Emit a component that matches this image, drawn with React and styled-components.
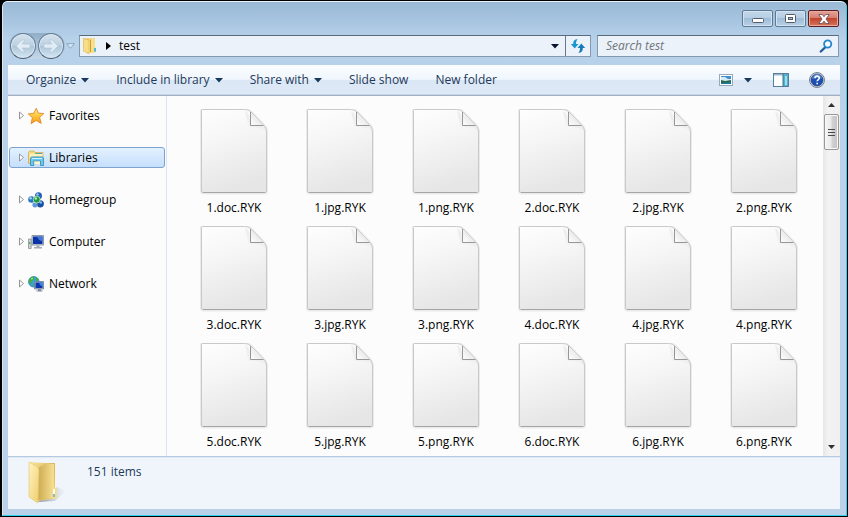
import React from 'react'
import styled, { createGlobalStyle } from 'styled-components'

const GlobalStyle = createGlobalStyle`
  * {
    box-sizing: border-box;
  }
  body {
    margin: 0;
    background: #000;
    font-family: 'Open Sans', 'Noto Sans', sans-serif;
    font-size: 12px;
    line-height: 16px;
    color: #000;
  }
  button, input {
    font: inherit;
    color: inherit;
    margin: 0;
    padding: 0;
  }
  button {
    border: 0;
    background: none;
  }
  svg {
    display: block;
    flex: none;
  }
`

const Window = styled.div`
  display: flex;
  flex-direction: column;
  min-height: 100vh;
  padding: 0 6px 7px;
  border: 1px solid #000;
  border-width: 1px 1px 1px 2px;
  border-radius: 7px 7px 0 0;
  background: linear-gradient(#98b8d5, #b6d1ea 38px, #b9d2e9 120px, #b9d2e9);
  box-shadow: inset 0 1px #eaf3fa, inset -1px -1px #29d3f4, inset 1px 0 #d8e8f5;
`

const TitleBar = styled.header`
  display: flex;
  justify-content: flex-end;
  gap: 2px;
  height: 34px;
  padding: 9px 2px 0 0;
`

const CaptionButton = styled.button`
  display: flex;
  align-items: center;
  justify-content: center;
  width: 31px;
  height: 17px;
  border: 1px solid ${props => (props.$close ? '#5b1f24' : '#5c7892')};
  border-radius: 2px;
  background: ${props =>
    props.$close
      ? 'linear-gradient(#e5a497, #d67d6e 48%, #c2452f 50%, #d8745a)'
      : 'linear-gradient(#c3d7ea, #b5cde3 48%, #9fbdd8 50%, #b8d0e6)'};
  box-shadow: inset 0 0 0 1px ${props => (props.$close ? '#e9aa9e' : '#d3e3f1')};
`

const NavBar = styled.div`
  display: flex;
  align-items: center;
  height: 22px;
  margin-bottom: 8px;
  padding-right: 2px;
`

const History = styled.div`
  display: flex;
  align-items: center;
  margin: 0 3px 0 1px;
`

const HistoryPair = styled.div`
  display: flex;
  gap: 2px;
  height: 26px;
  padding: 0 1px;
  border-radius: 13px;
  background: linear-gradient(#91aec8, #c3d8e9);
`

const HistoryButton = styled.button`
  display: flex;
  align-items: center;
  justify-content: center;
  width: 26px;
  height: 26px;
  border: 1px solid #677f95;
  border-bottom-color: #4a5c6e;
  border-radius: 50%;
  background: linear-gradient(#d5e3ee, #bccfe0 48%, #acc5d9 50%, #d3e6f4);
  box-shadow: inset 0 0 0 1px #dbe8f2;
`

const SmallButton = styled.button`
  display: flex;
  align-items: center;
  justify-content: center;
  width: ${props => props.$width}px;
  height: 20px;
`

const AddressBar = styled.div`
  display: flex;
  flex: 1;
  align-items: center;
  height: 22px;
  padding-left: 2px;
  border: 1px solid #8499ad;
  border-top-color: #596b7b;
  background: #ebf2fa;
`

const Crumb = styled.button`
  margin-left: 8px;
`

const CrumbArrow = styled.span`
  margin-left: 8px;
`

const Spacer = styled.div`
  flex: 1;
`

const Refresh = styled(SmallButton)`
  border-left: 1px solid #65798b;
`

const SearchBox = styled.label`
  display: flex;
  align-items: center;
  width: 242px;
  height: 22px;
  margin-left: 6px;
  padding: 0 5px 0 8px;
  border: 1px solid #8499ad;
  border-top-color: #596b7b;
  background: #ebf2fa;
`

const SearchInput = styled.input`
  flex: 1;
  min-width: 0;
  border: 0;
  outline: 0;
  background: none;
  &::placeholder {
    color: #707579;
    font-style: italic;
    opacity: 1;
  }
`

const Client = styled.div`
  display: flex;
  flex: 1;
  flex-direction: column;
  margin-right: 1px;
  background: #fcfcfc;
`

const Toolbar = styled.div`
  display: flex;
  align-items: center;
  gap: 27px;
  height: 31px;
  padding: 0 15px 0 18px;
  border-bottom: 1px solid #a0afc3;
  background: linear-gradient(#fcfeff, #eff6fd 48%, #dce7f5 50%, #dde9f7);
  box-shadow: inset 0 -1px #c7d5e6;
  color: #1e395b;
`

const ToolButton = styled.button`
  display: flex;
  align-items: center;
  gap: 5px;
  white-space: nowrap;
`

const ToolIcons = styled.div`
  display: flex;
  align-items: center;
  gap: 20px;
  margin-left: auto;
`

const ViewButton = styled(ToolButton)`
  gap: 11px;
  padding-right: 1px;
`

const Body = styled.div`
  display: flex;
  flex: 1;
`

const Sidebar = styled.nav`
  display: flex;
  flex: none;
  flex-direction: column;
  gap: 21px;
  width: 159px;
  padding: 9px 1px;
  border-right: 1px solid #dbe5f0;
`

const TreeItem = styled.button`
  display: flex;
  align-items: center;
  height: 21px;
  padding-left: 8px;
  border: 1px solid ${props => (props.$selected ? '#7da2ce' : 'transparent')};
  border-radius: 3px;
  background: ${props => (props.$selected ? 'linear-gradient(#e3f1fe, #c5dffc)' : 'none')};
`

const TreeIcon = styled.span`
  margin: 0 5px 0 3px;
`

const Files = styled.ul`
  display: grid;
  flex: 1;
  grid-template-columns: repeat(auto-fill, 106px);
  grid-auto-rows: 117px;
  align-content: start;
  margin: 0;
  padding: 13px 0 0 14px;
  list-style: none;
  height: 360px;
  min-height: 100%;
`

const File = styled.li`
  display: flex;
  flex-direction: column;
  align-items: center;
  gap: 4px;
`

const ScrollBar = styled.div`
  display: flex;
  flex: none;
  flex-direction: column;
  align-items: center;
  width: 17px;
  background: linear-gradient(90deg, #e6e6e6, #f2f2f2 30%, #f0f0f0);
`

const ScrollButton = styled.button`
  display: flex;
  align-items: center;
  justify-content: center;
  width: 17px;
  height: 18px;
  margin-top: ${props => (props.$end ? 'auto' : '0')};
`

const Thumb = styled.div`
  display: flex;
  flex-direction: column;
  align-items: center;
  justify-content: center;
  gap: 2px;
  width: 15px;
  height: 36px;
  border: 1px solid #989898;
  border-radius: 2px;
  background: linear-gradient(90deg, #f5f5f5, #e9e9eb 48%, #d3d3d6 52%, #c2c2c6);
  box-shadow: inset 0 0 0 1px #f8f8f8;
`

const Grip = styled.span`
  width: 7px;
  height: 1px;
  background: #4b4b4b;
`

const Details = styled.footer`
  display: flex;
  align-items: flex-start;
  gap: 20px;
  height: 53px;
  padding: 3px 18px;
  border-top: 1px solid #b5c9e0;
  box-shadow: inset 0 1px #dfe9f4;
  background: #f0f5fc;
  color: #1e395b;
`

const DetailsText = styled.span`
  padding-top: 4px;
`

const Caret = ({ color = '#173a5c' }) => (
  <svg width="8" height="5" viewBox="0 0 8 5">
    <path d="M0 0h8L4 4.5z" fill={color} />
  </svg>
)

const Arrow = ({ back }) => (
  <svg width="16" height="16" viewBox="0 0 16 16">
    <path
      d={back ? 'M1 8l6-6h3L7 6h8v4H7l3 4H7z' : 'M15 8L9 2H6l3 4H1v4h8l-3 4h3z'}
      fill="#e1edf6"
      stroke="#b4c8d9"
      strokeWidth=".7"
    />
  </svg>
)

const FolderIcon = () => (
  <svg width="41" height="48" viewBox="0 0 41 48">
    <defs>
      <linearGradient id="folderBack" x2="1" y2="1">
        <stop offset="0" stopColor="#fbe9a5" />
        <stop offset=".5" stopColor="#d9b656" />
        <stop offset="1" stopColor="#f5d779" />
      </linearGradient>
      <linearGradient id="folderInner">
        <stop offset="0" stopColor="#cdab52" />
        <stop offset="1" stopColor="#f8e092" />
      </linearGradient>
      <linearGradient id="folderFront" x2="1" y2="1">
        <stop offset="0" stopColor="#fff3c4" />
        <stop offset="1" stopColor="#efce6b" />
      </linearGradient>
      <linearGradient id="folderShade">
        <stop offset="0" stopColor="#6d7685" stopOpacity=".8" />
        <stop offset="1" stopColor="#a7b4c8" stopOpacity="0" />
      </linearGradient>
    </defs>
    <path d="M12 42l17-1 11-10-9-4z" fill="url(#folderShade)" />
    <path d="M3 2l15 1h11v25l2 1v9l-19 3z" fill="url(#folderBack)" />
    <path d="M12 8l7-4h9v34l-16 2z" fill="url(#folderInner)" />
    <path d="M3 2l9 5 1 3-1 33-9-6z" fill="url(#folderFront)" stroke="#e2c46d" strokeWidth=".6" />
    <path d="M27 26l4 3v9l-4 1z" fill="#f7dd85" />
    <path d="M28 29v8" stroke="#fff" strokeWidth="2" />
    <path d="M28 34v3" stroke="#459fd0" strokeWidth="1.400" />
  </svg>
)

const CrumbFolder = () => (
  <svg width="16" height="18" viewBox="0 0 16 18">
    <path d="M1.500 1.500H13v9l1 1V15l-9 1.500z" fill="#e3bb50" />
    <path d="M7 1.500h6V15l-6 1.500z" fill="#f9df88" />
    <path d="M1.500 1.500L5 2.500l2 1v13L1.500 14z" fill="#f9dd85" stroke="#dfbc55" strokeWidth=".7" />
    <path d="M8.500 2.500v12.500" stroke="#c99e3a" />
    <path d="M12 11h2v3.500h-2z" fill="#52b9cf" />
  </svg>
)

const RefreshIcon = () => (
  <svg width="16" height="16" viewBox="0 0 16 16">
    <path d="M7.500 1C4.500 1.500 3 3 3.200 6H.8L4.700 10.500 8.500 6H6C6 4 6.500 2.500 7.500 1z" fill="#1997d0" />
    <path d="M8.500 15c3-.5 4.500-2 4.300-5h2.400l-3.900-4.500L7.500 10H10c0 2-.5 3.500-1.500 5z" fill="#167cb9" />
  </svg>
)

const SearchIcon = () => (
  <svg width="14" height="14" viewBox="0 0 14 14" fill="none">
    <path d="M6 8.500L1.800 12.500" stroke="#245d9c" strokeWidth="2.400" strokeLinecap="round" />
    <circle cx="8.700" cy="5" r="3.600" fill="#f5fbff" stroke="#2485cb" strokeWidth="1.800" />
  </svg>
)

const PictureIcon = () => (
  <svg width="14" height="12" viewBox="0 0 14 12">
    <rect x=".5" y=".5" width="13" height="11" fill="#fff" stroke="#97a9bb" />
    <path d="M2 2h10v8H2z" fill="#438fcb" />
    <path d="M2 3h4l3 2h3v2H2z" fill="#d2ecf6" />
    <path d="M2 6l4 1 6-1v4H2z" fill="#28684f" />
    <path d="M2 9l10-1v2H2z" fill="#1d7a9e" />
  </svg>
)

const PaneIcon = () => (
  <svg width="16" height="14" viewBox="0 0 16 14">
    <rect x=".5" y=".5" width="15" height="13" fill="#fff" stroke="#567d9b" />
    <path d="M1 1h14v1.500H1z" fill="#9db7c9" />
    <path d="M10 1h5v12h-5z" fill="#51b1cf" />
    <path d="M10 .5v13" stroke="#416f8d" />
    <path d="M12 3h2v9h-2z" fill="#9cdced" />
  </svg>
)

const HelpIcon = () => (
  <svg width="16" height="16" viewBox="0 0 16 16">
    <circle cx="8" cy="8" r="7.500" fill="#dce1e8" stroke="#76818f" />
    <circle cx="8" cy="8" r="6" fill="#1c4fb3" stroke="#173778" strokeWidth=".7" />
    <path d="M3 7a5 5 0 0 1 10 0c-3-1.500-6-1-10 0z" fill="#6292dc" opacity=".7" />
    <path d="M6 6.200C6 3.300 10.500 3.500 10.300 6c-.1 1.500-2.100 1.600-2.100 3.300M8.200 10.800v1.500" fill="none" stroke="#fff" strokeWidth="1.600" />
  </svg>
)

const StarIcon = () => (
  <svg width="16" height="16" viewBox="0 0 16 16">
    <defs>
      <linearGradient id="star" x2="0" y2="1">
        <stop offset="0" stopColor="#fff09a" />
        <stop offset=".5" stopColor="#fdc63d" />
        <stop offset="1" stopColor="#f49a22" />
      </linearGradient>
    </defs>
    <path d="M8.200.2l2.200 4.900 5.400.5-4.100 3.700 1.500 6.100-5-2.900-5.200 3.200 1.400-6L.3 5.900l5.600-.7z" fill="url(#star)" stroke="#e0801c" strokeWidth=".8" strokeLinejoin="round" />
  </svg>
)

const LibraryIcon = () => (
  <svg width="16" height="16" viewBox="0 0 16 16">
    <path d="M.5 2.500L1.500 1h4.500l1 1.500h8V13.500H.5z" fill="#f5d77d" stroke="#cfae57" strokeWidth=".8" />
    <path d="M1.500 3.500h13v3h-13z" fill="#fff1c0" />
    <path d="M7 3.500h4" stroke="#63b572" />
    <path d="M11 3.500h3" stroke="#5a9fd8" />
    <path d="M2.500 15.500V9C2.500 7.800 3.300 7 4.500 7h9.500c1 0 1.600.8 1.600 2v6.500h-3.100V11H5.800v4.500z" fill="#6cc8ec" stroke="#3593c4" strokeWidth=".9" />
    <path d="M6.300 11.500h5.700V14H6.300z" fill="#fdf3cf" />
    <path d="M4 8.500h10" stroke="#cdf2ff" />
  </svg>
)

const HomegroupIcon = () => (
  <svg width="16" height="16" viewBox="0 0 16 16">
    <circle cx="10.500" cy="3.800" r="3.500" fill="#2560b4" />
    <circle cx="3.500" cy="7.500" r="3.300" fill="#2a74c4" />
    <circle cx="12.300" cy="11.800" r="3.600" fill="#1b4fa4" />
    <circle cx="7" cy="12.800" r="2.600" fill="#5e98d4" />
    <circle cx="8.700" cy="7.600" r="3.500" fill="#1f9a45" stroke="#d6f2dd" strokeWidth=".7" />
    <circle cx="9.500" cy="2.400" r="1.200" fill="#9fceee" />
    <circle cx="2.600" cy="6.300" r="1.200" fill="#9fdaf1" />
    <circle cx="7.800" cy="6.500" r="1.200" fill="#b8ecb9" />
    <circle cx="12.800" cy="10.500" r="1.300" fill="#85b7e6" />
  </svg>
)

const ComputerIcon = () => (
  <svg width="16" height="16" viewBox="0 0 16 16">
    <path d="M.5 5h2.700v9.500H.5z" fill="#cbd1d3" stroke="#7b8589" strokeWidth=".7" />
    <path d="M1 8h1.500v2H1z" fill="#59b34f" />
    <path d="M4 1.500h11.500V11H4z" fill="#cdd3dc" stroke="#828d9d" strokeWidth=".9" />
    <path d="M5 2.500h9.500V10H5z" fill="#0b32a6" />
    <path d="M9 2.500h5.500V7C11.500 7 10 5 9 2.500z" fill="#3f78dc" />
    <path d="M8.500 11.500h3V13H14v1.500H6V13h2.500z" fill="#a4acb6" />
  </svg>
)

const NetworkIcon = () => (
  <svg width="16" height="16" viewBox="0 0 16 16">
    <circle cx="5.800" cy="5.800" r="5.300" fill="#36a4d8" stroke="#2677b2" strokeWidth=".7" />
    <path d="M3 1.500c3-2 4 0 3 2L4 5.500 2.500 8C0 6 1 3 3 1.500zM8 1l3 3-3 1zM4 8l3 1v2z" fill="#43b03d" />
    <path d="M3 2.500l2-.8-1 2z" fill="#d9f6cd" />
    <path d="M6.500 5.500h9V13h-9z" fill="#aebccc" stroke="#6c7d94" strokeWidth=".8" />
    <path d="M7.500 6.500h7V12h-7z" fill="#0b35aa" />
    <path d="M11 6.500h3.500V10c-2 0-3-1-3.500-3.500z" fill="#3f86e6" />
    <path d="M10 13h3v1.500h1.500v1h-6v-1H10z" fill="#7d8ea3" />
  </svg>
)

const PageIcon = () => (
  <svg width="68" height="87" viewBox="0 0 68 87">
    <defs>
      <linearGradient id="page" x2=".25" y2="1">
        <stop offset="0" stopColor="#fefefe" />
        <stop offset=".4" stopColor="#f6f6f6" />
        <stop offset="1" stopColor="#e6e6e6" />
      </linearGradient>
      <linearGradient id="fold" x1="0" y1="1" x2=".5" y2=".5">
        <stop offset="0" stopColor="#fff" />
        <stop offset="1" stopColor="#ececec" />
      </linearGradient>
      <linearGradient id="foldShade" x1=".2" y1=".2" x2="0" y2="1">
        <stop offset="0" stopColor="#000" stopOpacity=".05" />
        <stop offset="1" stopColor="#000" stopOpacity="0" />
      </linearGradient>
    </defs>
    <path d="M2.500.5H44.500C48 .5 50 2 52 4L63 15.500C65.500 18 66.500 20 66.500 23V82q0 2-2 2H3.500q-2 0-2-2V1.500q0-1 1-1z" fill="none" stroke="#000" strokeOpacity=".07" strokeWidth="3" />
    <path d="M2.500.5H44.500C48 .5 50 2 52 4L63 15.500C65.500 18 66.500 20 66.500 23V82q0 1.500-1.500 1.500H3q-1.500 0-1.500-1.500V1.500q0-1 1-1z" fill="url(#page)" stroke="#c9c9c9" />
    <path d="M3 83.500h62" stroke="#a5a5a5" />
    <path d="M45 2c3 1 5 4 5.500 14.500L64 17c1.500 1.500 2 4 2 6-3-4-8-5-17.500-5z" fill="url(#foldShade)" />
    <path d="M50.500 3.500v13H63z" fill="url(#fold)" />
    <path d="M50.500 3v13.500H63.500" fill="none" stroke="#979797" />
  </svg>
)

const places = [
  { name: 'Favorites', Icon: StarIcon },
  { name: 'Libraries', Icon: LibraryIcon, selected: true },
  { name: 'Homegroup', Icon: HomegroupIcon },
  { name: 'Computer', Icon: ComputerIcon },
  { name: 'Network', Icon: NetworkIcon },
]

const commands = [
  { name: 'Organize', menu: true },
  { name: 'Include in library', menu: true },
  { name: 'Share with', menu: true },
  { name: 'Slide show' },
  { name: 'New folder' },
]

const files = [1, 2, 3, 4, 5, 6].flatMap(n =>
  ['doc', 'jpg', 'png'].map(ext => `${n}.${ext}.RYK`)
)

const App = () => (
  <Window>
    <GlobalStyle />
    <TitleBar>
      <CaptionButton aria-label="Minimize">
        <svg width="12" height="9" viewBox="0 0 12 9">
          <rect x=".5" y="4.500" width="11" height="4" rx="1" fill="#fff" stroke="#535b66" />
        </svg>
      </CaptionButton>
      <CaptionButton aria-label="Maximize">
        <svg width="11" height="9" viewBox="0 0 11 9">
          <rect x=".5" y=".5" width="10" height="8" rx="1" fill="#fff" stroke="#535b66" />
          <rect x="3.500" y="3.500" width="4" height="2" fill="#a3bfd8" stroke="#535b66" />
        </svg>
      </CaptionButton>
      <CaptionButton $close aria-label="Close">
        <svg width="12" height="10" viewBox="0 0 12 10">
          <path d="M.8.5h3.400L6 2.800 7.800.5h3.400L8 5l3.200 4.500H7.800L6 7.200 4.200 9.500H.8L4 5z" fill="#fff" stroke="#5d4a55" strokeWidth=".8" />
        </svg>
      </CaptionButton>
    </TitleBar>
    <NavBar>
      <History>
        <HistoryPair>
          <HistoryButton aria-label="Back"><Arrow back /></HistoryButton>
          <HistoryButton aria-label="Forward"><Arrow /></HistoryButton>
        </HistoryPair>
        <SmallButton $width={11} aria-label="Recent pages">
          <svg width="9" height="6" viewBox="0 0 9 6">
            <path d="M.7.7h7.600L4.500 5.300z" fill="#dbe9f5" stroke="#86a1b8" strokeWidth=".9" />
          </svg>
        </SmallButton>
      </History>
      <AddressBar>
        <CrumbFolder />
        <CrumbArrow>
          <svg width="5" height="8" viewBox="0 0 5 8"><path d="M0 0l5 4-5 4z" /></svg>
        </CrumbArrow>
        <Crumb>test</Crumb>
        <Spacer />
        <SmallButton $width={21} aria-label="Previous locations"><Caret color="#07152e" /></SmallButton>
        <Refresh $width={25} aria-label="Refresh"><RefreshIcon /></Refresh>
      </AddressBar>
      <SearchBox>
        <SearchInput type="text" placeholder="Search test" aria-label="Search test" />
        <SearchIcon />
      </SearchBox>
    </NavBar>
    <Client>
      <Toolbar>
        {commands.map(({ name, menu }) => (
          <ToolButton key={name}>
            {name}
            {menu && <Caret />}
          </ToolButton>
        ))}
        <ToolIcons>
          <ViewButton aria-label="Change your view"><PictureIcon /><Caret /></ViewButton>
          <ToolButton aria-label="Show the preview pane"><PaneIcon /></ToolButton>
          <ToolButton aria-label="Get help"><HelpIcon /></ToolButton>
        </ToolIcons>
      </Toolbar>
      <Body>
        <Sidebar>
          {places.map(({ name, Icon, selected }) => (
            <TreeItem key={name} $selected={selected}>
              <svg width="7" height="9" viewBox="0 0 7 9">
                <path d="M1.500 1v7L5.500 4.500z" fill="#fff" stroke="#8b8b8b" strokeWidth=".9" />
              </svg>
              <TreeIcon><Icon /></TreeIcon>
              {name}
            </TreeItem>
          ))}
        </Sidebar>
        <Files>
          {files.map(name => (
            <File key={name}>
              <PageIcon />
              <span>{name}</span>
            </File>
          ))}
        </Files>
        <ScrollBar>
          <ScrollButton aria-label="Scroll up">
            <svg width="7" height="4" viewBox="0 0 7 4"><path d="M0 4h7L3.500 0z" fill="#303030" /></svg>
          </ScrollButton>
          <Thumb>
            <Grip /><Grip /><Grip />
          </Thumb>
          <ScrollButton $end aria-label="Scroll down">
            <svg width="7" height="4" viewBox="0 0 7 4"><path d="M0 0h7L3.500 4z" fill="#303030" /></svg>
          </ScrollButton>
        </ScrollBar>
      </Body>
      <Details>
        <FolderIcon />
        <DetailsText>151 items</DetailsText>
      </Details>
    </Client>
  </Window>
)

export default App
